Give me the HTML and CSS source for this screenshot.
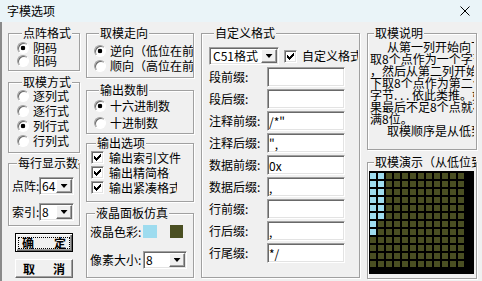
FILE: index.html
```html
<!DOCTYPE html>
<html lang="zh-CN">
<head>
    <meta charset="UTF-8">
    <meta name="viewport" content="width=device-width, initial-scale=1.0">
    <title>字模选项</title>
    <link rel="stylesheet" href="styles.css">
</head>
<body>
    <div class="titlebar">
        <span class="title">字模选项</span>
        <svg class="close" width="10" height="10" viewBox="0 0 10 10">
            <path d="M0.5 0.5L9.5 9.5M9.5 0.5L0.5 9.5" stroke="#000" stroke-width="1"/>
        </svg>
    </div>

    <div class="client">
        <!-- left column -->
        <div class="col col-1">
            <div class="group g-dot">
                <div class="legend">点阵格式</div>
                <label class="radio on"><i></i>阴码</label>
                <label class="radio"><i></i>阳码</label>
            </div>
            <div class="group g-scan">
                <div class="legend">取模方式</div>
                <label class="radio"><i></i>逐列式</label>
                <label class="radio"><i></i>逐行式</label>
                <label class="radio on"><i></i>列行式</label>
                <label class="radio"><i></i>行列式</label>
            </div>
            <div class="group g-show">
                <div class="legend legend-clip">每行显示数据</div>
                <div class="field">
                    <span class="field-label">点阵:</span>
                    <div class="combo"><span class="combo-value">64</span><span class="combo-btn"></span></div>
                </div>
                <div class="field">
                    <span class="field-label">索引:</span>
                    <div class="combo"><span class="combo-value">8</span><span class="combo-btn"></span></div>
                </div>
            </div>
            <button class="btn btn-default"><span class="btn-text"><span>确</span><span>定</span></span></button>
            <button class="btn btn-cancel"><span class="btn-text"><span>取</span><span>消</span></span></button>
        </div>

        <!-- second column -->
        <div class="col col-2">
            <div class="group g-dir">
                <div class="legend">取模走向</div>
                <label class="radio on"><i></i><span class="clip">逆向（低位在前）</span></label>
                <label class="radio"><i></i><span class="clip">顺向（高位在前）</span></label>
            </div>
            <div class="group g-base">
                <div class="legend">输出数制</div>
                <label class="radio on"><i></i>十六进制数</label>
                <label class="radio"><i></i>十进制数</label>
            </div>
            <div class="group g-opt">
                <div class="legend">输出选项</div>
                <label class="check"><i><svg width="7" height="7" viewBox="0 0 7 7" shape-rendering="crispEdges"><path d="M0 2V5H1V6H2V7H3V6H4V5H5V4H6V3H7V0H6V1H5V2H4V3H3V4H2V3H1V2Z"/></svg></i><span>输出索引文件</span></label>
                <label class="check"><i><svg width="7" height="7" viewBox="0 0 7 7" shape-rendering="crispEdges"><path d="M0 2V5H1V6H2V7H3V6H4V5H5V4H6V3H7V0H6V1H5V2H4V3H3V4H2V3H1V2Z"/></svg></i><span class="clip clip-slim">输出精简格式</span></label>
                <label class="check"><i><svg width="7" height="7" viewBox="0 0 7 7" shape-rendering="crispEdges"><path d="M0 2V5H1V6H2V7H3V6H4V5H5V4H6V3H7V0H6V1H5V2H4V3H3V4H2V3H1V2Z"/></svg></i><span class="clip clip-dense">输出紧凑格式</span></label>
            </div>
            <div class="group g-lcd">
                <div class="legend">液晶面板仿真</div>
                <div class="field">
                    <span class="field-label">液晶色彩:</span>
                    <span class="swatch lit"></span>
                    <span class="swatch dark"></span>
                </div>
                <div class="field">
                    <span class="field-label">像素大小:</span>
                    <div class="combo combo-size"><span class="combo-value">8</span><span class="combo-btn"></span></div>
                </div>
            </div>
        </div>

        <!-- custom format -->
        <div class="col col-3">
            <div class="group g-fmt">
                <div class="legend">自定义格式</div>
                <div class="fmt-head">
                    <div class="combo combo-fmt"><span class="combo-value">C51格式</span><span class="combo-btn"></span></div>
                    <label class="check check-custom"><i><svg width="7" height="7" viewBox="0 0 7 7" shape-rendering="crispEdges"><path d="M0 2V5H1V6H2V7H3V6H4V5H5V4H6V3H7V0H6V1H5V2H4V3H3V4H2V3H1V2Z"/></svg></i><span class="clip">自定义格式</span></label>
                </div>
                <div class="line"><span class="line-label">段前缀:</span><input class="edit" type="text" value=""></div>
                <div class="line"><span class="line-label">段后缀:</span><input class="edit" type="text" value=""></div>
                <div class="line"><span class="line-label">注释前缀:</span><input class="edit" type="text" value="/*&quot;"></div>
                <div class="line"><span class="line-label">注释后缀:</span><input class="edit" type="text" value="&quot;,"></div>
                <div class="line"><span class="line-label">数据前缀:</span><input class="edit" type="text" value="0x"></div>
                <div class="line"><span class="line-label">数据后缀:</span><input class="edit" type="text" value=","></div>
                <div class="line"><span class="line-label">行前缀:</span><input class="edit" type="text" value=""></div>
                <div class="line"><span class="line-label">行后缀:</span><input class="edit" type="text" value=","></div>
                <div class="line"><span class="line-label">行尾缀:</span><input class="edit" type="text" value="*/"></div>
            </div>
        </div>

        <!-- description and preview -->
        <div class="col col-4">
            <div class="group g-desc">
                <div class="legend">取模说明</div>
                <div class="desc">
                    <p>从第一列开始向下<br>取8个点作为一个字节<br>，然后从第二列开始向<br>下取8个点作为第二个<br>字节<span class="dots">...</span>依此类推。如<br>果最后不足8个点就补<br>满8位。</p>
                    <p>取模顺序是从低到高，即第一个点作为最低位。</p>
                </div>
            </div>
            <div class="group g-demo">
                <div class="legend legend-clip">取模演示（从低位到高位）</div>
                <svg class="lcd" width="105" height="103" viewBox="0 0 105 103">
                    <defs>
                        <pattern id="px-off" x="1" y="2" width="8" height="8" patternUnits="userSpaceOnUse">
                            <rect width="6" height="6" fill="#4a4f22"/>
                        </pattern>
                        <pattern id="px-on" x="1" y="2" width="8" height="8" patternUnits="userSpaceOnUse">
                            <rect width="6" height="6" fill="#9edcef"/>
                        </pattern>
                    </defs>
                    <rect width="105" height="103" fill="#000"/>
                    <rect x="1" y="2" width="96" height="96" fill="url(#px-off)"/>
                    <rect x="1" y="2" width="8" height="64" fill="url(#px-on)"/>
                    <rect x="9" y="2" width="8" height="48" fill="url(#px-on)"/>
                </svg>
            </div>
        </div>
    </div>
</body>
</html>
```

FILE: styles.css
```css
* {
    box-sizing: border-box;
}

body {
    margin: 0;
    width: 482px;
    height: 281px;
    overflow: hidden;
    background: #f0f0f0;
    font-family: "Noto Sans CJK SC", "Noto Sans", sans-serif;
    font-size: 12px;
    line-height: 12px;
    color: #000;
}

.titlebar {
    height: 22px;
    display: flex;
    align-items: center;
    justify-content: space-between;
    padding: 0 12px 0 7px;
    background: #eaf4f8;
}

/* the 2px strip on the left is the desktop showing past the dialog edge */
.client {
    display: flex;
    align-items: flex-start;
    height: 259px;
    padding: 11px 0 0 6px;
    border-left: 2px solid #8a8a8a;
}

.col {
    flex: none;
    display: flex;
    flex-direction: column;
}

.col-1 { width: 72px; }
.col-2 { width: 108px; margin-left: 6px; }
.col-3 { width: 159px; margin-left: 7px; }
.col-4 { width: 110px; margin-left: 7px; }

/* etched group box */
.group {
    flex: none;
    display: flex;
    flex-direction: column;
    border: 1px solid #a0a0a0;
    box-shadow: inset 1px 1px 0 #fff, 1px 1px 0 #fff;
}

.legend {
    align-self: flex-start;
    height: 12px;
    margin: -7px 0 0 5px;
    padding: 0 1px;
    background: #f0f0f0;
    white-space: nowrap;
}

.legend-clip {
    max-width: calc(100% - 5px);
    overflow: hidden;
}

.col-4 .legend {
    margin-left: 6px;
}

.col-4 .legend-clip {
    max-width: calc(100% - 6px);
}

/* radio / checkbox */
.radio,
.check {
    flex: none;
    display: flex;
    align-items: center;
    height: 15px;
    white-space: nowrap;
}

.radio i {
    flex: none;
    width: 12px;
    height: 12px;
    margin-right: 4px;
    border: 1px solid;
    border-color: #a0a0a0 #fff #fff #a0a0a0;
    border-radius: 50%;
    background: #fff;
    box-shadow: inset 1px 1px 0 #696969;
}

.radio.on i {
    background: radial-gradient(circle, #000 0 2px, #fff 2.6px);
}

.check i {
    flex: none;
    width: 13px;
    height: 13px;
    display: flex;
    align-items: center;
    justify-content: center;
    margin-right: 5px;
    border: 1px solid;
    border-color: #a0a0a0 #fff #fff #a0a0a0;
    background: #fff;
    box-shadow: inset 1px 1px 0 #696969, inset -1px -1px 0 #e3e3e3;
}

.clip {
    min-width: 0;
    overflow: hidden;
}

.clip-slim { max-width: 61px; }
.clip-dense { max-width: 68px; }

/* combo box */
.field {
    flex: none;
    display: flex;
    align-items: center;
}

.field-label {
    flex: none;
    white-space: nowrap;
}

.combo {
    flex: none;
    display: flex;
    height: 18px;
    padding: 1px;
    border: 1px solid;
    border-color: #a0a0a0 #fff #fff #a0a0a0;
    background: #fff;
    box-shadow: inset 1px 1px 0 #696969, inset -1px -1px 0 #e3e3e3;
}

.combo-value {
    flex: 1;
    min-width: 0;
    padding-left: 1px;
    line-height: 14px;
    white-space: nowrap;
    overflow: hidden;
}

.combo-btn {
    flex: none;
    width: 16px;
    display: flex;
    align-items: center;
    justify-content: center;
    border: 1px solid;
    border-color: #fff #696969 #696969 #fff;
    background: #f0f0f0;
    box-shadow: inset -1px -1px 0 #a0a0a0;
}

.combo-btn::after {
    content: "";
    width: 7px;
    height: 4px;
    background: #000;
    clip-path: polygon(0 0, 100% 0, 50% 100%);
}

/* left column */
.g-dot {
    height: 38px;
    padding-left: 8px;
}

.g-dot .radio { height: 13px; }
.g-dot .legend + .radio { margin-top: 2px; }

.g-scan {
    height: 71px;
    margin-top: 11px;
    padding-left: 8px;
}

.g-show {
    height: 63px;
    margin-top: 10px;
    padding-left: 3px;
}

.g-show .field { margin-top: 8px; }
.g-show .field-label { width: 27px; }
.g-show .combo { width: 35px; }

.btn {
    flex: none;
    display: flex;
    align-items: center;
    justify-content: center;
    width: 58px;
    height: 19px;
    margin: 7px 0 0 7px;
    padding: 0;
    border: 1px solid;
    border-color: #fff #696969 #696969 #fff;
    background: #f0f0f0;
    box-shadow: inset -1px -1px 0 #a0a0a0;
    font: bold 12px/12px "Noto Sans CJK SC", sans-serif;
    color: #000;
}

.btn-default {
    border-color: #000;
    box-shadow: inset 1px 1px 0 #fff, inset -1px -1px 0 #696969, inset -2px -2px 0 #a0a0a0;
}

.btn-text {
    display: flex;
    justify-content: center;
    align-items: center;
    gap: 18px;
}

.btn-default .btn-text {
    width: 52px;
    height: 12px;
    gap: 20px;
    border: 1px dotted #000;
}

/* second column */
.g-dir {
    height: 45px;
    padding-left: 7px;
}

.g-dir .legend + .radio { margin-top: 4px; }

.g-base {
    height: 44px;
    margin-top: 12px;
    padding-left: 7px;
}

.g-base .radio { margin-top: 2px; }

.g-opt {
    height: 59px;
    margin-top: 9px;
    padding-left: 4px;
}

.g-opt .legend + .check { margin-top: 1px; }

.g-lcd {
    height: 65px;
    margin-top: 11px;
    padding-left: 3px;
}

.g-lcd .field-label { width: 53px; }
.g-lcd .field { margin-top: 13px; }
.g-lcd .legend + .field { margin-top: 6px; }

.swatch {
    flex: none;
    height: 13px;
}

.swatch.lit {
    width: 14px;
    background: #9edcef;
}

.swatch.dark {
    width: 13px;
    margin-left: 13px;
    background: #4a4f22;
}

.combo-size { width: 44px; }

/* custom format */
.g-fmt {
    height: 245px;
    padding-left: 7px;
}

.fmt-head {
    flex: none;
    display: flex;
    align-items: center;
    height: 18px;
    margin-top: 8px;
}

.combo-fmt {
    width: 70px;
    padding-left: 2px;
}

.check-custom {
    width: 74px;
    margin-left: 5px;
}

.line {
    flex: none;
    display: flex;
    align-items: center;
    height: 20px;
    margin-top: 2px;
}

.line-label {
    flex: none;
    width: 58px;
    white-space: nowrap;
}

.edit {
    flex: none;
    width: 78px;
    height: 20px;
    margin: 0;
    padding: 0 1px;
    border: 1px solid;
    border-color: #a0a0a0 #fff #fff #a0a0a0;
    background: #fff;
    box-shadow: inset 1px 1px 0 #696969, inset -1px -1px 0 #e3e3e3;
    font: 12px "Noto Sans CJK SC", sans-serif;
    color: #000;
    outline: none;
}

/* description + preview */
.g-desc {
    height: 117px;
}

.desc {
    width: 104px;
    margin: 2px 0 0 2px;
    white-space: nowrap;
    overflow: hidden;
}

.desc p {
    margin: 0;
    text-indent: 17px;
}

.dots {
    display: inline-block;
    width: 18px;
    text-indent: 0;
    letter-spacing: 2.6px;
}

.g-demo {
    height: 117px;
    margin-top: 12px;
}

.lcd {
    display: block;
    margin: 3px 0 0 1px;
}
```
